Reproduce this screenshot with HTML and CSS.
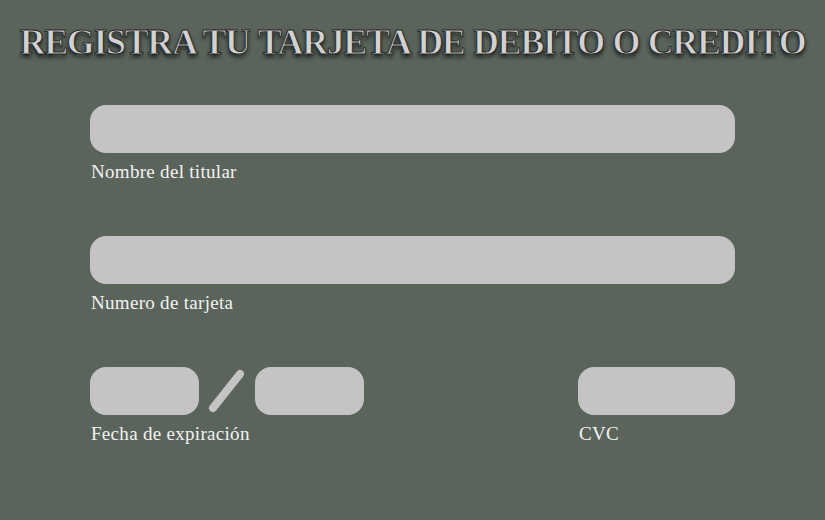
FILE: index.html
```html
<!DOCTYPE html>
<html lang="es">
<head>
<meta charset="utf-8">
<title>Registra tu tarjeta</title>
<link rel="stylesheet" href="styles.css">
</head>
<body>
<h1 class="title">REGISTRA TU TARJETA DE DEBITO O CREDITO</h1>
<form class="card-form">
  <div class="field">
    <input class="input input-full" type="text">
    <label class="label">Nombre del titular</label>
  </div>
  <div class="field">
    <input class="input input-full" type="text">
    <label class="label">Numero de tarjeta</label>
  </div>
  <div class="row">
    <div class="field">
      <div class="expiry">
        <input class="input input-small" type="text">
        <svg class="slash" width="56" height="48" viewBox="0 0 56 48"><line x1="14" y1="41" x2="41" y2="7" stroke="#c4c4c4" stroke-width="8" stroke-linecap="round"/></svg>
        <input class="input input-small" type="text">
      </div>
      <label class="label">Fecha de expiración</label>
    </div>
    <div class="field">
      <input class="input input-cvc" type="text">
      <label class="label">CVC</label>
    </div>
  </div>
</form>
</body>
</html>
```
FILE: styles.css
```css
html, body {
  margin: 0;
  padding: 0;
}
body {
  background: #5a645b;
  width: 825px;
  height: 520px;
  overflow: hidden;
  font-family: "Liberation Serif", "DejaVu Serif", serif;
}
.title {
  margin: 0;
  padding-top: 22px;
  text-align: center;
  font-size: 36px;
  letter-spacing: -1.4px;
  word-spacing: 1px;
  font-weight: bold;
  line-height: 40px;
  color: #d2d2d2;
  -webkit-text-stroke: 1px #2b2b2b;
  text-shadow: 0 3px 4px rgba(0, 0, 0, 0.75);
  white-space: nowrap;
}
.card-form {
  width: 645px;
  margin: 43px 0 0 90px;
  display: flex;
  flex-direction: column;
  gap: 53px;
}
.field {
  display: flex;
  flex-direction: column;
  gap: 8px;
}
.input {
  display: block;
  box-sizing: border-box;
  height: 48px;
  border: none;
  border-radius: 16px;
  background: #c4c4c4;
  outline: none;
  padding: 0 16px;
}
.input-full { width: 645px; }
.input-small { width: 109px; }
.input-cvc { width: 157px; }
.expiry {
  display: flex;
  align-items: center;
}
.slash {
  display: block;
}
.label {
  color: #f2f2f2;
  font-size: 19px;
  letter-spacing: 0.3px;
  line-height: 22px;
  padding-left: 1px;
}
.row {
  display: flex;
  justify-content: space-between;
}
```
